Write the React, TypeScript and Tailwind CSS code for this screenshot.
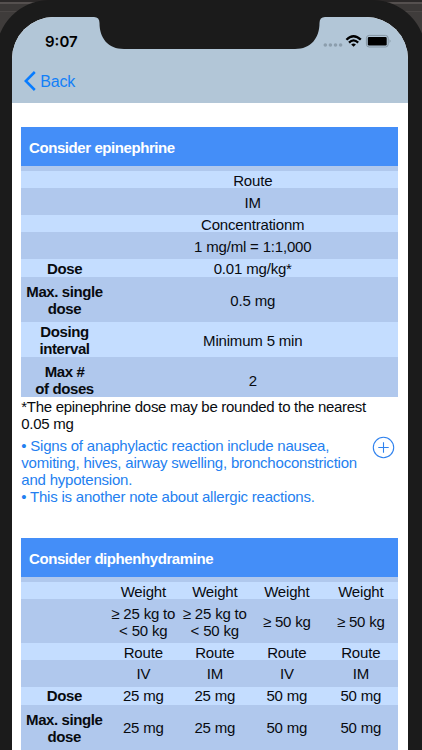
import React from "react";

type Row = { label?: React.ReactNode; cells: React.ReactNode[]; height: string; pad: string };

const range = (
  <>
    ≥ 25 kg to
    <br />
    &lt; 50 kg
  </>
);
const maxSingle = (
  <>
    Max. single
    <br />
    dose
  </>
);

const epinephrine: Row[] = [
  { cells: ["Route"], height: "h-[17px]", pad: "pt-px" },
  { cells: ["IM"], height: "h-[27px]", pad: "pt-px" },
  { cells: ["Concentrationm"], height: "h-[17px]", pad: "pt-px" },
  { cells: ["1 mg/ml = 1:1,000"], height: "h-[27px]", pad: "pt-[2px]" },
  { label: "Dose", cells: ["0.01 mg/kg*"], height: "h-[18px]", pad: "pt-px" },
  { label: maxSingle, cells: ["0.5 mg"], height: "h-[45px]", pad: "pt-px" },
  { label: <>Dosing<br />interval</>, cells: ["Minimum 5 min"], height: "h-[35px]", pad: "pt-px" },
  { label: <>Max #<br />of doses</>, cells: ["2"], height: "h-[40px]", pad: "pt-[6px]" },
];

const diphenhydramine: Row[] = [
  { cells: ["Weight", "Weight", "Weight", "Weight"], height: "h-[17px]", pad: "pt-px" },
  { cells: [range, range, "≥ 50 kg", "≥ 50 kg"], height: "h-[44px]", pad: "pt-px" },
  { cells: ["Route", "Route", "Route", "Route"], height: "h-[17px]", pad: "pt-px" },
  { cells: ["IV", "IM", "IV", "IM"], height: "h-[27px]", pad: "pb-px" },
  { label: "Dose", cells: ["25 mg", "25 mg", "50 mg", "50 mg"], height: "h-[18px]", pad: "pb-px" },
  { label: maxSingle, cells: ["25 mg", "25 mg", "50 mg", "50 mg"], height: "h-[46px]", pad: "pb-px" },
];

function DoseTable({ title, rows, columns }: { title: string; rows: Row[]; columns: string }) {
  return (
    <section>
      <h2 className="flex h-[39px] items-center bg-[#448ef8] pt-px pl-[7.7px] font-bold tracking-[-0.42px] text-white">{title}</h2>
      <div className="h-[5px] bg-[#b0c8ed]" />
      {rows.map((row, i) => (
        <div
          key={i}
          className={`grid items-center text-center ${columns} ${row.height} ${row.pad} ${i % 2 ? "bg-[#b0c8ed]" : "bg-[#c4ddff]"}`}
        >
          <div className="font-bold tracking-[-0.4px]">{row.label}</div>
          {row.cells.map((cell, j) => (
            <div key={j} className="tracking-[-0.18px] whitespace-nowrap">{cell}</div>
          ))}
        </div>
      ))}
    </section>
  );
}

function Notch() {
  return (
    <svg width="422" height="60" viewBox="0 0 422 60">
      <path d="M90 16V17H94Q99.5 17 99.5 23C99.5 38 108 49 124 49H295C311 49 319.5 38 319.5 23Q319.5 17 325 17V16Z" fill="#1b1b1b" />
    </svg>
  );
}

function StatusIcons() {
  return (
    <svg className="mt-[16px]" width="70" height="16" viewBox="322 33 70 16">
      <g fill="#8c9ead">
        <circle cx="325.3" cy="45" r="1.8" />
        <circle cx="330.4" cy="45" r="1.8" />
        <circle cx="335.5" cy="45" r="1.8" />
        <circle cx="340.6" cy="45" r="1.8" />
      </g>
      <g fill="none" stroke="#000" strokeWidth="2.3">
        <path d="M346.4 39.7Q353.5 32.8 360.8 39.7" />
        <path d="M349 42.6Q353.5 38.2 358.2 42.6" />
      </g>
      <path d="M351.2 44.4Q353.5 42.5 355.9 44.4L353.5 46.7Z" />
      <rect x="366.4" y="35.4" width="21.8" height="11.6" rx="2.8" fill="none" stroke="#8495a3" />
      <rect x="367.8" y="36.9" width="18.9" height="8.6" rx="1.2" />
      <path d="M389.7 39.2Q391.5 41.2 389.7 43.2Z" fill="#73828f" />
    </svg>
  );
}

export default function App() {
  return (
    <div className="h-[750px] w-[422px] overflow-hidden bg-[linear-gradient(#2b2828_0_2px,#55504f_2px_4px,#3b3837_4px_11px,#4a4645_11px_12px,#3f3c3b_12px)] font-['Liberation_Sans',Arial,sans-serif] text-[15px] leading-[17px] text-[#080b10]">
      <div className="relative -ml-[4px] h-[760px] w-[430px] rounded-t-[54px] bg-[#1b1b1b] pt-[17px] pl-[16px]">
        <div className="h-[740px] w-[395.5px] overflow-hidden rounded-t-[42px] bg-white">
          <header className="h-[86px] bg-[#b2c6d7]">
            <div className="flex h-[54px] items-start justify-between pr-[15.5px] pl-[33px]">
              <span className="pt-[16px] font-['Inter',sans-serif] text-[15px] font-semibold text-black">9:07</span>
              <StatusIcons />
            </div>
            <button className="flex items-center gap-[4.3px] pl-[12px] text-[16px] tracking-[-0.2px] text-[#1280f8]">
              <svg width="12" height="20" viewBox="0 0 12 20" fill="none" stroke="#087cff" strokeWidth="2.5">
                <path d="M10.8 1L1.8 10L10.8 19" />
              </svg>
              <span className="pt-px">Back</span>
            </button>
          </header>
          <main className="pt-[24px] pl-[9.3px]">
            <div className="w-[376.4px]">
              <DoseTable title="Consider epinephrine" rows={epinephrine} columns="grid-cols-[86.5px_1fr]" />
              <p className="mt-[2px] h-[34px] leading-[16.7px] tracking-[-0.29px]">
                *The epinephrine dose may be rounded to the nearest
                <br />
                0.05 mg
              </p>
              <div className="mt-[4px] flex h-[101px] justify-between text-[#247ff0]">
                <p className="tracking-[-0.21px] whitespace-nowrap">
                  • Signs of anaphylactic reaction include nausea,
                  <br />
                  vomiting, hives, airway swelling, bronchoconstriction
                  <br />
                  and hypotension.
                  <br />
                  • This is another note about allergic reactions.
                </p>
                <svg className="mt-[-1px] mr-[3px] shrink-0" width="23" height="23" viewBox="0 0 23 23" fill="none" stroke="#2f82ee" strokeWidth="1.1">
                  <circle cx="11.5" cy="11.5" r="10.2" />
                  <path d="M11.5 6.3V16.7M6.3 11.5H16.7" />
                </svg>
              </div>
              <DoseTable
                title="Consider diphenhydramine"
                rows={diphenhydramine}
                columns="grid-cols-[86px_72px_71px_73px_75px]"
              />
            </div>
          </main>
        </div>
        <div className="absolute top-0 left-[4px]">
          <Notch />
        </div>
      </div>
    </div>
  );
}
